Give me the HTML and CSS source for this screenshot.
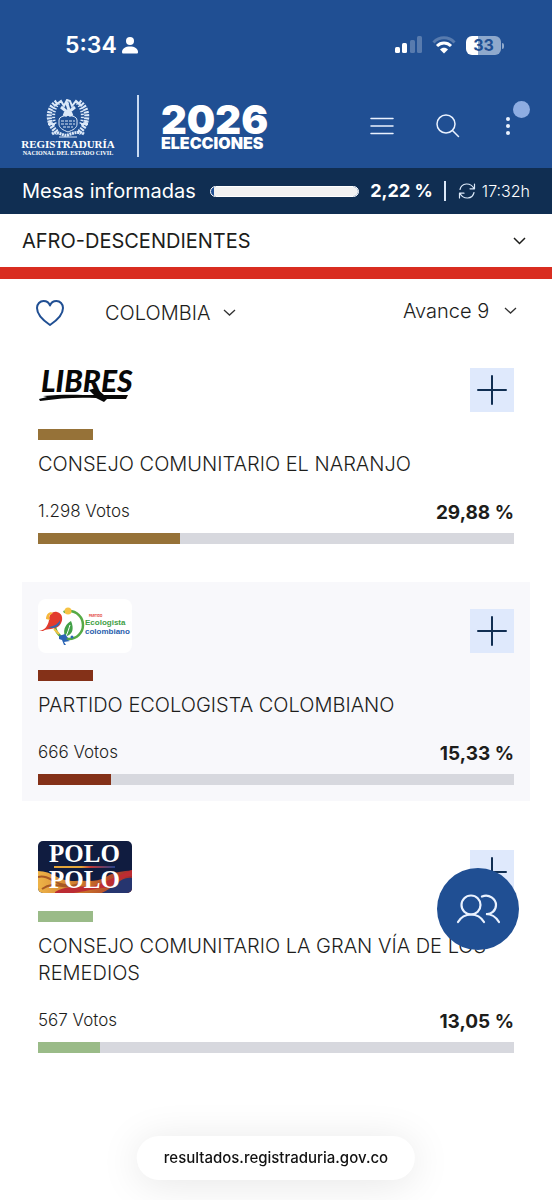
FILE: index.html
```html
<!DOCTYPE html>
<html lang="es">
<head>
  <meta charset="UTF-8">
  <meta name="viewport" content="width=device-width, initial-scale=1.0">
  <title>Elecciones 2026 - Resultados</title>
  <link rel="stylesheet" href="styles.css">
</head>
<body>
  <header class="top">
    <!-- Status bar -->
    <div class="status-bar">
      <div class="status-left">
        <span class="clock">5:34</span>
        <svg width="16" height="17" viewBox="0 0 16 17" fill="#fff">
          <circle cx="8" cy="4" r="4"/>
          <path d="M0 15C0 11.500 3.500 9.500 8 9.500S16 11.500 16 15C16 16 15.500 16.500 14.500 16.500H1.500C.5 16.500 0 16 0 15Z"/>
        </svg>
      </div>
      <div class="status-right">
        <svg width="27" height="18" viewBox="0 0 27 18" fill="#fff">
          <rect x="0" y="11" width="5" height="6" rx="1.500"/>
          <rect x="7" y="7" width="5" height="10" rx="1.500"/>
          <rect x="15" y="4" width="5" height="13" rx="1.500" opacity=".25"/>
          <rect x="22" y="0" width="5" height="17" rx="1.500" opacity=".25"/>
        </svg>
        <svg width="24" height="18" viewBox="0 0 24 18" fill="none" stroke="#fff" stroke-width="3">
          <path d="M1.500 6.500C7.500 .3 16.500 .3 22.500 6.500" opacity=".25"/>
          <path d="M5 10C9 6 15 6 19 10"/>
          <path d="M8 13.500C10 11.300 14 11.300 16 13.500L12 17.500Z" fill="#fff" stroke="none"/>
        </svg>
        <div class="battery"><span>33</span></div>
      </div>
    </div>

    <!-- Main nav -->
    <div class="nav">
      <a class="brand" href="#" aria-label="Registraduría Nacional del Estado Civil">
        <svg width="44" height="39" viewBox="0 0 44 39" fill="none" stroke="#dbe8f8">
          <path d="M11 3C1 9 0 25 12 34M33 3C43 9 44 25 32 34" stroke-width="5" stroke-dasharray="2 1"/>
          <path d="M13 4C7 10 6 20 10 26M31 4C37 10 38 20 34 26" stroke-width="3" stroke-dasharray="1.500 1.500"/>
          <path d="M8 7L15 2L18 7L21 1L24 2L26 7L30 2L36 7" stroke-width="2"/>
          <path d="M22 3C19 6 25 9 22 14M15 8L20 12L18 17M29 8L24 12L26 17M19 17L22 13L25 17" stroke-width="3"/>
          <path d="M13 21C13 15 31 15 31 21V25C31 29 27 31 22 33C17 31 13 29 13 25Z" stroke-width="1"/>
          <path d="M15 22H29M15 25H29M17 28H27" stroke-width="1" stroke-dasharray="3 1"/>
          <path d="M3 22L8 27M41 22L36 27M2 25H9M35 25H42" stroke-width="2"/>
          <path d="M6 35C12 31 17 38 22 36S33 32 38 35" stroke-width="3" stroke-dasharray="2 .6"/>
          <path d="M13 38H31" stroke-width="1"/>
        </svg>
        <span class="brand-name">REGISTRADURÍA</span>
        <span class="brand-sub">NACIONAL DEL ESTADO CIVIL</span>
      </a>
      <a class="event" href="#">
        <span class="event-year">2026</span>
        <span class="event-name">ELECCIONES</span>
      </a>
      <div class="nav-actions">
        <button class="icon-button" aria-label="Menú">
          <svg width="24" height="24" viewBox="0 0 24 24" fill="none" stroke="#eaf2ff" stroke-width="1.500" stroke-linecap="round">
            <path d="M1 4.500H23M1 12H23M1 19.500H23"/>
          </svg>
        </button>
        <button class="icon-button" aria-label="Buscar">
          <svg width="24" height="24" viewBox="0 0 24 24" fill="none" stroke="#eaf2ff" stroke-width="1.500" stroke-linecap="round">
            <circle cx="10" cy="10" r="9"/>
            <path d="M16.500 16.500L22.500 22.500"/>
          </svg>
        </button>
        <button class="icon-button" aria-label="Más opciones">
          <svg width="12" height="24" viewBox="0 0 12 24" fill="#eaf2ff">
            <circle cx="6" cy="5" r="2"/>
            <circle cx="6" cy="12" r="2"/>
            <circle cx="6" cy="19" r="2"/>
          </svg>
          <span class="badge"></span>
        </button>
      </div>
    </div>
  </header>

  <!-- Mesas informadas -->
  <div class="progress-row">
    <span class="progress-label">Mesas informadas</span>
    <div class="progress-track"><div class="progress-rest"></div></div>
    <strong class="progress-value">2,22 %</strong>
    <span class="updated">
      <svg width="18" height="16" viewBox="0 0 18 16" fill="none" stroke="#dbe8f8" stroke-width="1.200" stroke-linecap="round" stroke-linejoin="round">
        <path d="M2 6.500C3.500 -.5 12.500 -.8 16 5.500M16.500 1V5.800H12M16 9.500C14.500 16.500 5.500 16.800 2 10.500M1.500 15V10.200H6"/>
      </svg>
      17:32h
    </span>
  </div>

  <label class="category">
    <select aria-label="Circunscripción">
      <option>AFRO-DESCENDIENTES</option>
    </select>
    <svg width="13" height="8" viewBox="0 0 13 8" fill="none" stroke="#1d1d1b" stroke-width="1.500">
      <path d="M1 1L6.500 6.500L12 1"/>
    </svg>
  </label>

  <main>
    <div class="filters">
      <button class="icon-button" aria-label="Favorito">
        <svg width="28" height="26" viewBox="0 0 28 26" fill="none" stroke="#204f93" stroke-width="2" stroke-linejoin="round">
          <path d="M14 25C8 21 1 15 1 8C1 4 4 1 7.500 1C10.500 1 13 2.500 14 5.500C15 2.500 17.500 1 20.500 1C24 1 27 4 27 8C27 15 20 21 14 25Z"/>
        </svg>
      </button>
      <label class="filter">
        <select aria-label="Territorio">
          <option>COLOMBIA</option>
        </select>
        <svg width="13" height="8" viewBox="0 0 13 8" fill="none" stroke="#333" stroke-width="1.300">
          <path d="M1 1L6.500 6L12 1"/>
        </svg>
      </label>
      <label class="filter filter-right">
        <select aria-label="Avance">
          <option>Avance 9</option>
        </select>
        <svg width="13" height="8" viewBox="0 0 13 8" fill="none" stroke="#333" stroke-width="1.300">
          <path d="M1 1L6.500 6L12 1"/>
        </svg>
      </label>
    </div>

    <!-- Results -->
    <article class="card gold">
      <div class="card-top">
        <svg class="logo" width="94" height="54" viewBox="0 0 94 54">
          <text class="logo-libres" x="3" y="34">LIBRES</text>
          <path d="M5 38C25 36 42 37 56 37L51 32L58 30L66 37L90 37L88 41L69 41L66 44L58 40C40 39 22 40 2 43L1 41L9 39Z" fill="#080808"/>
        </svg>
        <button class="add" aria-label="Ver detalle">
          <svg width="30" height="30" viewBox="0 0 30 30" stroke="#102e52" stroke-width="2" stroke-linecap="round">
            <path d="M15 1V29M1 15H29"/>
          </svg>
        </button>
      </div>
      <div class="swatch"></div>
      <h2>CONSEJO COMUNITARIO EL NARANJO</h2>
      <div class="votes"><span>1.298 Votos</span><strong>29,88 %</strong></div>
      <div class="bar"><div class="bar-fill" style="width: 29.88%"></div></div>
    </article>

    <article class="card card-alt red">
      <div class="card-top">
        <svg class="logo logo-white" width="94" height="54" viewBox="0 0 94 54">
          <circle cx="31" cy="26" r="14" fill="none" stroke="#55aa45" stroke-width="2.500" stroke-dasharray="52 8 28"/>
          <circle cx="30" cy="12" r="3.500" fill="#f6c344"/>
          <path d="M1 32C7 31 10 27 11 21C11 15 15 12 19 13C25 14 26 22 21 27C16 31 10 29 5 32Z" fill="#e23b2d"/>
          <path d="M8 20C8 15 12 12 15 14L11 17L12 21Z" fill="#f6b73c"/>
          <path d="M10 28C16 28 21 24 22 21C23 26 17 31 10 28Z" fill="#2f67b2"/>
          <path d="M16 30L21 35" stroke="#f6c344" stroke-width="2"/>
          <path d="M27 37C24 30 29 24 33 22C36 29 35 35 29 37Z" fill="#42a047"/>
          <path d="M28 37C30 33 31 29 32 26" stroke="#fff" stroke-width="1" fill="none"/>
          <path d="M21 37L27 35L30 39L28 40L32 42L26 43L28 46L26 46L24 41L21 40Z" fill="#2c65b5"/>
          <circle cx="34" cy="38" r="1.500" fill="#2c65b5"/>
          <text class="logo-eco-small" x="51" y="18">PARTIDO</text>
          <text class="logo-eco logo-eco-green" x="47" y="26">Ecologista</text>
          <text class="logo-eco logo-eco-blue" x="47" y="35">colombiano</text>
        </svg>
        <button class="add" aria-label="Ver detalle">
          <svg width="30" height="30" viewBox="0 0 30 30" stroke="#102e52" stroke-width="2" stroke-linecap="round">
            <path d="M15 1V29M1 15H29"/>
          </svg>
        </button>
      </div>
      <div class="swatch"></div>
      <h2>PARTIDO ECOLOGISTA COLOMBIANO</h2>
      <div class="votes"><span>666 Votos</span><strong>15,33 %</strong></div>
      <div class="bar"><div class="bar-fill" style="width: 15.33%"></div></div>
    </article>

    <article class="card green">
      <div class="card-top">
        <svg class="logo" width="94" height="54" viewBox="0 0 94 54">
          <defs>
            <clipPath id="polo-box"><rect y="1" width="94" height="52" rx="5"/></clipPath>
            <linearGradient id="polo-line">
              <stop offset="0" stop-color="#e5a63a"/>
              <stop offset=".45" stop-color="#e5a63a"/>
              <stop offset=".6" stop-color="#c43636"/>
              <stop offset="1" stop-color="#26438c"/>
            </linearGradient>
            <linearGradient id="polo-flag">
              <stop offset="0" stop-color="#eeb347"/>
              <stop offset=".5" stop-color="#c8702b"/>
              <stop offset="1" stop-color="#a32b2d"/>
            </linearGradient>
          </defs>
          <g clip-path="url(#polo-box)">
            <rect width="94" height="54" fill="#101c40"/>
            <path d="M0 31C15 31 21 42 37 41C47 40 58 43 68 37C77 31 85 32 94 30V54H0Z" fill="url(#polo-flag)"/>
            <path d="M0 37C12 34 18 47 31 45M4 49C19 39 25 52 43 43" fill="none" stroke="#a75824" stroke-width="2"/>
            <path d="M17 52C34 43 47 49 60 45C72 39 81 36 94 30V36C81 36 76 48 64 48C48 50 41 54 17 54Z" fill="#bc2c33"/>
            <path d="M60 54C75 51 81 36 94 38V54Z" fill="#26356f"/>
            <rect x="16" y="26" width="61" height="2" fill="url(#polo-line)"/>
          </g>
          <text class="logo-polo" x="11" y="22">POLO</text>
          <text class="logo-polo" x="11" y="48">POLO</text>
        </svg>
        <button class="add" aria-label="Ver detalle">
          <svg width="30" height="30" viewBox="0 0 30 30" stroke="#102e52" stroke-width="2" stroke-linecap="round">
            <path d="M15 1V29M1 15H29"/>
          </svg>
        </button>
      </div>
      <div class="swatch"></div>
      <h2>CONSEJO COMUNITARIO LA GRAN VÍA DE LOS REMEDIOS</h2>
      <div class="votes"><span>567 Votos</span><strong>13,05 %</strong></div>
      <div class="bar"><div class="bar-fill" style="width: 13.05%"></div></div>
    </article>
  </main>

  <button class="floating" aria-label="Candidatos">
    <svg width="44" height="30" viewBox="0 0 44 30" fill="none" stroke="#eaf2ff" stroke-width="2.200" stroke-linecap="round">
      <circle cx="15" cy="11" r="9.500"/>
      <path d="M2 28C8 18 22 18 28 28"/>
      <path d="M26 2.500C33 -.5 40 5 40 11C40 17 35 20.500 30 20C36 20 40 23 43 28"/>
    </svg>
  </button>

  <a class="address" href="#">resultados.registraduria.gov.co</a>
</body>
</html>
```

FILE: styles.css
```css
* {
  box-sizing: border-box;
}
body {
  margin: 0;
  min-height: 100vh;
  background-color: #fff;
  color: #1d1d1b;
  font-family: Inter, "Liberation Sans", sans-serif;
  font-size: 20px;
  line-height: 28px;
}
a {
  color: inherit;
  text-decoration: none;
}
button {
  padding: 0;
  border: none;
  background: none;
  cursor: pointer;
}
svg {
  display: block;
  flex-shrink: 0;
}

/* Header */
.top {
  background-color: #204f93;
  color: #fff;
}
.status-bar {
  display: flex;
  justify-content: space-between;
  padding: 31px 51px 0 65px;
  height: 88px;
}
.status-left,
.status-right {
  display: flex;
  align-items: center;
  height: 28px;
}
.status-left {
  gap: 5px;
}
.status-right {
  gap: 10px;
}
.clock {
  font-size: 23px;
  font-weight: 600;
}
.battery {
  position: relative;
  width: 35px;
  height: 19px;
  border-radius: 6px;
  background: linear-gradient(90deg, #fff 34%, #8fa9cc 34%);
  color: #204f93;
  font-size: 16px;
  font-weight: 700;
  line-height: 19px;
  text-align: center;
}
.battery::after {
  content: "";
  position: absolute;
  top: 7px;
  right: -3px;
  width: 2px;
  height: 6px;
  border-radius: 0 2px 2px 0;
  background-color: #8fa9cc;
}
.nav {
  display: flex;
  align-items: center;
  height: 80px;
  padding: 0 38px 4px 22px;
}
.brand {
  display: flex;
  flex-direction: column;
  align-items: center;
  width: 92px;
  padding-top: 2px;
  font-family: "Liberation Serif", serif;
  font-weight: 700;
  white-space: nowrap;
}
.brand-name {
  margin-top: 1px;
  font-size: 11px;
  line-height: 11px;
}
.brand-sub {
  font-size: 6px;
  line-height: 6px;
}
.event {
  display: flex;
  flex-direction: column;
  height: 62px;
  margin-left: 23px;
  padding: 8px 0 0 22px;
  border-left: 2px solid #c8daf2;
  font-weight: 900;
}
.event-year {
  font-size: 40px;
  line-height: 34px;
}
.event-name {
  font-size: 16px;
  line-height: 12px;
}
.nav-actions {
  display: flex;
  gap: 42px;
  margin-left: auto;
}
.icon-button {
  position: relative;
}
.badge {
  position: absolute;
  top: -13px;
  right: -16px;
  width: 17px;
  height: 17px;
  border-radius: 50%;
  background-color: #8eade2;
}

/* Mesas informadas */
.progress-row {
  display: flex;
  align-items: center;
  height: 46px;
  padding: 0 22px;
  background-color: #102e52;
  color: #fff;
  white-space: nowrap;
}
.progress-track {
  flex: 1;
  height: 11px;
  margin: 0 11px 0 14px;
  border: 1px solid #fff;
  border-radius: 6px;
  background-color: #204f93;
  overflow: hidden;
}
.progress-rest {
  height: 100%;
  margin-left: 2%;
  background-color: #f1f1f1;
}
.progress-value {
  font-size: 18px;
}
.updated {
  display: flex;
  align-items: center;
  gap: 6px;
  height: 20px;
  margin-left: 11px;
  padding-left: 12px;
  border-left: 2px solid #dbe8f8;
  font-size: 16px;
  font-weight: 300;
}

/* Selects */
select {
  appearance: none;
  padding: 0;
  border: none;
  background: none;
  color: inherit;
  font: inherit;
  cursor: pointer;
}
.category {
  display: flex;
  align-items: center;
  height: 65px;
  padding: 0 26px 0 22px;
  border-bottom: 12px solid #d92d20;
}
.category select {
  flex: 1;
}

main {
  padding: 0 22px 120px;
}
.filters {
  display: flex;
  align-items: center;
  height: 62px;
  padding: 6px 13px 0 14px;
}
.filter {
  display: flex;
  align-items: center;
  gap: 12px;
  margin-left: 41px;
  font-weight: 300;
}
.filter-right {
  gap: 14px;
  margin-left: auto;
  padding-bottom: 5px;
}

/* Result cards */
.card {
  margin-bottom: 22px;
  padding: 17px 16px 16px;
}
.card-alt {
  background-color: #f8f8fb;
}
.card-top {
  display: flex;
  justify-content: space-between;
  align-items: flex-end;
}
.logo {
  overflow: visible;
}
.logo-white {
  border-radius: 8px;
  background-color: #fff;
}
.logo-libres {
  font-family: Lato, sans-serif;
  font-size: 30px;
  font-style: italic;
  font-weight: 900;
  fill: #080808;
}
.logo-eco {
  font-family: "Liberation Sans", sans-serif;
  font-size: 8px;
  font-weight: 700;
}
.logo-eco-green {
  fill: #3f9f46;
}
.logo-eco-blue {
  fill: #295eac;
}
.logo-eco-small {
  font-size: 3px;
  font-weight: 700;
  fill: #e23b2d;
}
.logo-polo {
  font-family: "Liberation Serif", serif;
  font-size: 25px;
  font-weight: 700;
  fill: #fff;
}
.add {
  display: flex;
  align-items: center;
  justify-content: center;
  width: 44px;
  height: 44px;
  background-color: #dfe9fc;
}
.swatch {
  width: 55px;
  height: 11px;
  margin: 17px 0 11px;
}
.card h2 {
  margin: 0 0 21px;
  font-size: 20px;
  font-weight: 300;
  line-height: 27px;
}
.votes {
  display: flex;
  justify-content: space-between;
  height: 28px;
  margin-bottom: 6px;
}
.votes span {
  font-size: 17px;
  font-weight: 300;
  line-height: 24px;
}
.votes strong {
  font-size: 19px;
}
.bar {
  height: 11px;
  background-color: #d7d8de;
}
.bar-fill {
  height: 100%;
}
.gold .swatch,
.gold .bar-fill {
  background-color: #967238;
}
.red .swatch,
.red .bar-fill {
  background-color: #843118;
}
.green .swatch,
.green .bar-fill {
  background-color: #9abb88;
}

/* Floating elements */
.floating {
  position: fixed;
  right: 33px;
  bottom: 250px;
  display: flex;
  align-items: center;
  justify-content: center;
  width: 82px;
  height: 82px;
  border-radius: 50%;
  background-color: #204f93;
}
.address {
  position: fixed;
  bottom: 20px;
  left: 50%;
  transform: translateX(-50%);
  padding: 8px 27px;
  border-radius: 22px;
  background-color: #fff;
  box-shadow: 0 4px 40px rgba(0, 0, 0, 0.1);
  color: #111;
  font-size: 15px;
  font-weight: 500;
}
```
